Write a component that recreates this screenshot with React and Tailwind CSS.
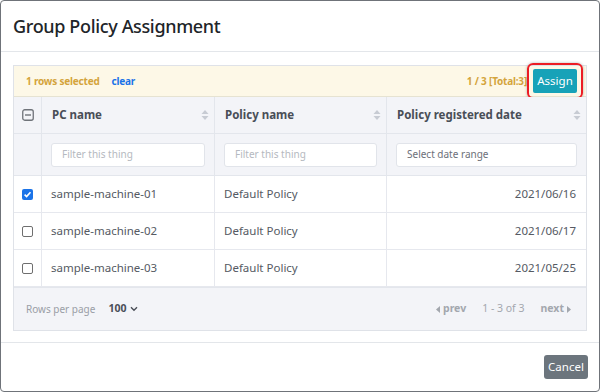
import React from "react";

const font = { fontFamily: '"Noto Sans", "Open Sans", sans-serif' };

function SortIcon() {
  return (
    <svg width="8" height="12" viewBox="0 0 8 12" className="shrink-0">
      <path d="M4 1 L7.5 5 L0.5 5 Z" fill="#c7cbd3" />
      <path d="M4 11 L7.5 7 L0.5 7 Z" fill="#c7cbd3" />
    </svg>
  );
}

function Check({ checked }) {
  if (checked) {
    return (
      <div className="w-[11px] h-[11px] rounded-[2px] bg-[#1a73e8] flex items-center justify-center">
        <svg width="9" height="9" viewBox="0 0 9 9">
          <path d="M1.6 4.6 L3.6 6.6 L7.5 2.2" stroke="white" strokeWidth="1.6" fill="none" />
        </svg>
      </div>
    );
  }
  return <div className="w-[11px] h-[11px] rounded-[2px] border border-[#6f6f6f] bg-white" />;
}

const rows = [
  { pc: "sample-machine-01", policy: "Default Policy", date: "2021/06/16", checked: true },
  { pc: "sample-machine-02", policy: "Default Policy", date: "2021/06/17", checked: false },
  { pc: "sample-machine-03", policy: "Default Policy", date: "2021/05/25", checked: false },
];

export default function App() {
  return (
    <div className="w-[600px] h-[392px] bg-white" style={font}>
      <div className="w-[600px] h-[392px] border border-[#6f7379] rounded-[4px] bg-white flex flex-col">
        <div className="h-[51px] flex items-center px-[12px] border-b border-[#e3e6ea] shrink-0">
          <h1 className="text-[18px] font-medium tracking-[-0.35px] text-[#212529]">Group Policy Assignment</h1>
        </div>
        <div className="px-[12px] pt-[13px] pb-[11px] shrink-0">
          <div className="border border-[#dfe2e8]">
            <div className="h-[31px] bg-[#fdf8e7] flex items-center pl-[12px] pr-[3px] border-b border-[#e6e3d2]">
              <span className="text-[10px] tracking-[-0.2px] font-bold text-[#d4a43c]">1 rows selected</span>
              <span className="text-[10px] tracking-[-0.2px] font-bold text-[#1a73e8] ml-[12px]">clear</span>
              <span className="ml-auto text-[10px] tracking-[-0.2px] font-bold text-[#d4a43c]">1 / 3 [Total:3]</span>
              <div className="ml-0 rounded-[6px] border-2 border-[#ec1c24] p-[4px] -my-[3px] shadow-[0_0_3px_rgba(0,0,0,0.3)]">
                <button className="h-[24px] w-[44px] bg-[#17a2b8] text-white text-[11.5px] rounded-[2px] flex items-center justify-center">Assign</button>
              </div>
            </div>
            <div className="grid grid-cols-[28px_173px_172px_1fr]">
              <div className="h-[37px] bg-[#f3f4f8] border-b border-r border-[#e3e6ec] flex items-center justify-center">
                <svg width="12" height="12" viewBox="0 0 12 12">
                  <rect x="0.75" y="0.75" width="10.5" height="10.5" rx="2" fill="none" stroke="#6f7379" strokeWidth="1.3" />
                  <path d="M3 6 H9" stroke="#6f7379" strokeWidth="1.4" />
                </svg>
              </div>
              {["PC name", "Policy name", "Policy registered date"].map((h, i) => (
                <div key={h} className={"h-[37px] bg-[#f3f4f8] border-b border-[#e3e6ec] flex items-center pl-[10px] pr-[5px] " + (i < 2 ? "border-r" : "")}>
                  <span className="text-[11.5px] font-bold text-[#494e57]">{h}</span>
                  <span className="ml-auto"><SortIcon /></span>
                </div>
              ))}
              <div className="h-[42px] bg-[#f3f4f8] border-b border-r border-[#e3e6ec]" />
              {["Filter this thing", "Filter this thing", "Select date range"].map((p, i) => (
                <div key={i} className={"h-[42px] bg-[#f3f4f8] border-b border-[#e3e6ec] flex items-center pl-[9px] pr-[9px] " + (i < 2 ? "border-r" : "")}>
                  <div className="h-[24px] w-full bg-white border border-[#e1e4ea] rounded-[3px] flex items-center px-[10px]">
                    <span className={"text-[10px] " + (i < 2 ? "text-[#b5b9c0]" : "text-[#6c7079]")}>{p}</span>
                  </div>
                </div>
              ))}
              {rows.map((r) => (
                <React.Fragment key={r.pc}>
                  <div className="h-[37px] bg-white border-b border-r border-[#e6e8ee] flex items-center justify-center">
                    <Check checked={r.checked} />
                  </div>
                  <div className="h-[37px] bg-white border-b border-r border-[#e6e8ee] flex items-center pl-[9px]">
                    <span className="text-[11.5px] text-[#555a63]">{r.pc}</span>
                  </div>
                  <div className="h-[37px] bg-white border-b border-r border-[#e6e8ee] flex items-center pl-[9px]">
                    <span className="text-[11.5px] text-[#555a63]">{r.policy}</span>
                  </div>
                  <div className="h-[37px] bg-white border-b border-[#e6e8ee] flex items-center justify-end pr-[10px]">
                    <span className="text-[11.5px] text-[#555a63]">{r.date}</span>
                  </div>
                </React.Fragment>
              ))}
            </div>
            <div className="h-[43px] bg-[#f3f4f8] border-t border-[#e3e6ec] flex items-center pl-[12px] pr-[15px]">
              <span className="text-[10px] text-[#9a9ea6]">Rows per page</span>
              <span className="ml-[13px] text-[10.5px] font-bold text-[#494e57]">100</span>
              <svg width="8" height="6" viewBox="0 0 8 6" className="ml-[4px]">
                <path d="M1 1.2 L4 4.2 L7 1.2" stroke="#494e57" strokeWidth="1.4" fill="none" />
              </svg>
              <div className="ml-auto flex items-center text-[10.5px] text-[#a3a7ae]">
                <svg width="4" height="7" viewBox="0 0 4 7" className="mr-[3px]"><path d="M4 0 L0 3.5 L4 7 Z" fill="#a3a7ae" /></svg>
                <span className="font-bold">prev</span>
                <span className="ml-[16px]">1 - 3 of 3</span>
                <span className="ml-[16px] font-bold">next</span>
                <svg width="4" height="7" viewBox="0 0 4 7" className="ml-[3px]"><path d="M0 0 L4 3.5 L0 7 Z" fill="#a3a7ae" /></svg>
              </div>
            </div>
          </div>
        </div>
        <div className="flex-1 border-t border-[#e3e6ea] flex items-center justify-end px-[11px]">
          <button className="h-[24px] w-[44px] bg-[#6c757d] text-white text-[11.5px] rounded-[3px] flex items-center justify-center">Cancel</button>
        </div>
      </div>
    </div>
  );
}
